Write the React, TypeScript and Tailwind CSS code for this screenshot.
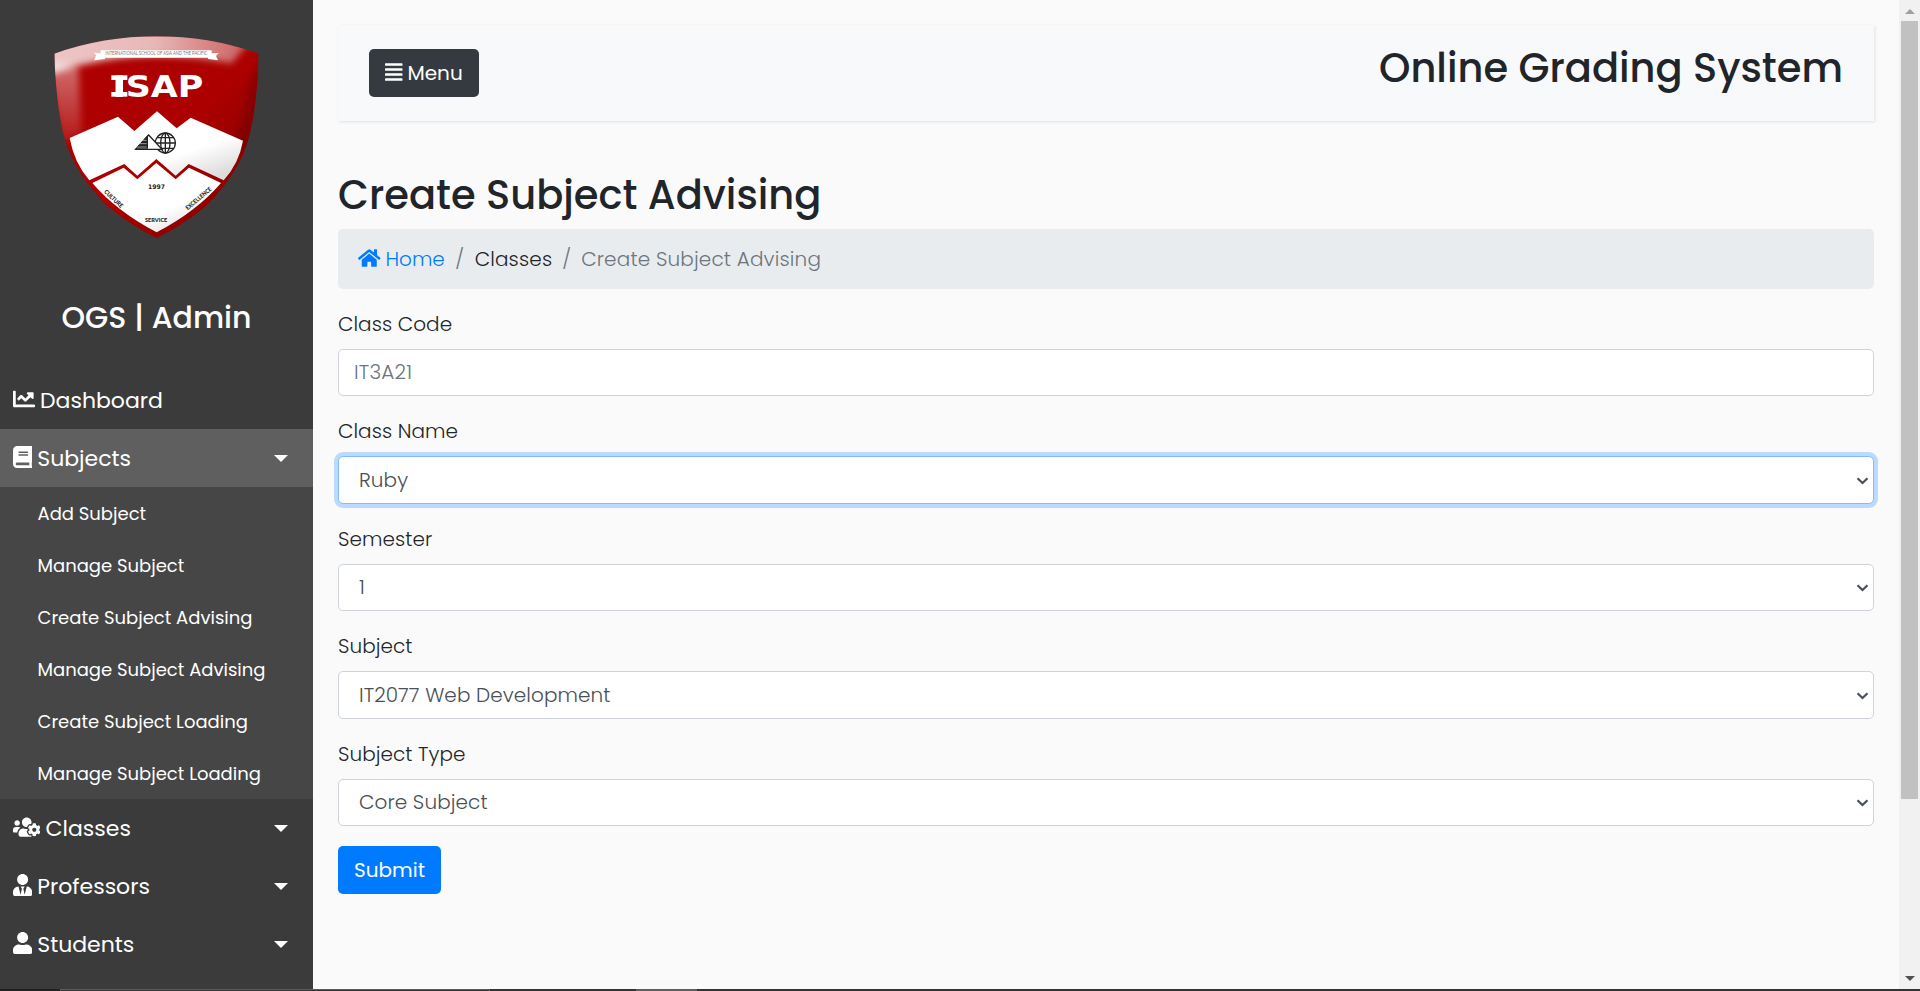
import type { ReactNode } from "react";
import {
  FaAlignJustify,
  FaBook,
  FaChartLine,
  FaHome,
  FaUser,
  FaUsersCog,
  FaUserTie,
} from "react-icons/fa";

const SHIELD =
  "M163 161 Q310 109 470 109 Q630 109 776 161 Q774 260 760 350 Q745 440 715 492 Q682 554 618 618 Q549 676 470 714 Q391 676 322 618 Q258 554 225 492 Q190 430 178 340 Q166 260 163 161 Z";

function Crest() {
  return (
    <svg viewBox="0 0 939 780" className="block h-[260px] w-[313px] shrink-0">
      <defs>
        <clipPath id="shield">
          <path d={SHIELD} />
        </clipPath>
        <linearGradient id="red" x1="0" y1="0" x2="1" y2="1">
          <stop offset="0" stopColor="#b00000" />
          <stop offset="0.55" stopColor="#ac0000" />
          <stop offset="1" stopColor="#780000" />
        </linearGradient>
        <linearGradient id="paper" x1="0.3" y1="0" x2="1" y2="0.8">
          <stop offset="0.65" stopColor="#ffffff" />
          <stop offset="1" stopColor="#dcdcdc" />
        </linearGradient>
        <linearGradient id="shine" x1="0" y1="0" x2="1" y2="0">
          <stop offset="0" stopColor="#fff" stopOpacity="0.78" />
          <stop offset="0.5" stopColor="#fff" stopOpacity="0.72" />
          <stop offset="1" stopColor="#fff" stopOpacity="0.3" />
        </linearGradient>
        <linearGradient id="sideShine" x1="0" y1="0" x2="0" y2="1">
          <stop offset="0" stopColor="#fff" stopOpacity="0.45" />
          <stop offset="1" stopColor="#fff" stopOpacity="0.08" />
        </linearGradient>
        <filter id="soft" x="-20%" y="-20%" width="140%" height="140%">
          <feGaussianBlur stdDeviation="11" />
        </filter>
      </defs>
      <g clipPath="url(#shield)">
        <rect x="160" y="100" width="620" height="620" fill="url(#red)" />
        <path d="M140 180 L235 200 L245 400 L185 430 Z" fill="url(#sideShine)" filter="url(#soft)" />
        <path
          d="M130 60 H800 L745 130 L695 190 Q580 168 470 168 Q360 168 240 196 L150 225 Z"
          fill="url(#shine)"
          filter="url(#soft)"
        />
        <path d="M790 160 L745 260 Q730 380 690 440 L760 460 Z" fill="#600000" opacity="0.4" filter="url(#soft)" />
      </g>
      <path
        d="M209 414 L354 350 L403 393 L471 334 L530 385 L572 353 L729 422 Q717 490 671 541 L566 492 L527 527 L469 477 L412 527 L373 492 L268 541 Q223 490 209 414 Z"
        fill="url(#paper)"
      />
      <path
        d="M277 549 L371 503 L412 538 L469 489 L527 538 L567 503 L663 549 Q590 634 470 697 Q350 634 277 549 Z"
        fill="url(#paper)"
      />
      <path d="M282 181 L289 166 L282 158 L302 160 V151 H635 V160 L656 159 L648 168 L654 181 L624 177 V173 H315 V177 Z" fill="#fff" />
      <text x="316" y="164" textLength="306" lengthAdjust="spacingAndGlyphs" fontSize="14" fill="#777" className="font-['Lato']">
        INTERNATIONAL SCHOOL OF ASIA AND THE PACIFIC
      </text>
      <rect x="334" y="226" width="48" height="14" fill="#fff" />
      <rect x="334" y="276" width="48" height="14" fill="#fff" />
      <rect x="347" y="226" width="22" height="64" fill="#fff" />
      <text
        x="338"
        y="290"
        textLength="272"
        lengthAdjust="spacingAndGlyphs"
        fontSize="88"
        fontWeight="bold"
        fill="#fff"
        className="font-['DejaVu_Sans']"
      >
        ISAP
      </text>
      <g fill="none" stroke="#222" strokeWidth="4">
        <circle cx="496" cy="429" r="30" />
        <ellipse cx="496" cy="429" rx="14" ry="30" />
        <path d="M496 399 V459 M466 429 H526 M473 413 H519 M473 445 H519" />
        <path d="M446 405 L486 448 H407 Z" fill="#fff" />
        <path d="M444 404 V446 H406 Z" fill="#222" stroke="none" />
        <path d="M424 421 H440 M416 431 H440 M408 441 H440" stroke="#ddd" strokeWidth="2" />
      </g>
      <text x="444" y="567" textLength="51" fontSize="19" fontWeight="bold" fill="#222" className="font-['DejaVu_Sans']" lengthAdjust="spacingAndGlyphs">
        1997
      </text>
      <text x="435" y="666" textLength="67" fontSize="17" fontWeight="900" fill="#222" className="font-['Lato']" lengthAdjust="spacingAndGlyphs">
        SERVICE
      </text>
      <text x="0" y="0" textLength="70" fontSize="18" fontWeight="900" fill="#222" transform="translate(311 577) rotate(43)" className="font-['Lato']" lengthAdjust="spacingAndGlyphs">
        CULTURE
      </text>
      <text x="0" y="0" textLength="96" fontSize="18" fontWeight="900" fill="#222" transform="translate(563 631) rotate(-40)" className="font-['Lato']" lengthAdjust="spacingAndGlyphs">
        EXCELLENCE
      </text>
    </svg>
  );
}

function NavItem({
  icon,
  label,
  active,
  caret = true,
}: {
  icon: ReactNode;
  label: string;
  active?: boolean;
  caret?: boolean;
}) {
  return (
    <a
      className={`flex h-[58px] shrink-0 items-center gap-[5.5px] pr-[25px] pl-[12.5px] text-[22px] leading-[33px] ${
        active ? "bg-[#5f5f5f]" : ""
      }`}
    >
      {icon}
      <span>{label}</span>
      {caret && (
        <span className="ml-auto h-0 w-0 border-x-[7px] border-t-[7px] border-x-transparent border-t-white" />
      )}
    </a>
  );
}

const SUBJECT_LINKS = [
  "Add Subject",
  "Manage Subject",
  "Create Subject Advising",
  "Manage Subject Advising",
  "Create Subject Loading",
  "Manage Subject Loading",
];

function Sidebar() {
  return (
    <nav className="flex w-[313px] shrink-0 flex-col overflow-hidden bg-[#3b3b3b] text-white">
      <Crest />
      <h3 className="mb-[18px] flex h-[93px] shrink-0 items-center justify-center pt-[22px] text-[30px] leading-[36px] font-medium">
        OGS | Admin
      </h3>
      <NavItem icon={<FaChartLine className="mt-[-3px] h-[22px] w-[22px]" />} label="Dashboard" caret={false} />
      <NavItem icon={<FaBook className="mt-[-3px] h-[22px] w-[19.25px]" />} label="Subjects" active />
      <ul className="shrink-0 bg-[#464646]">
        {SUBJECT_LINKS.map((link) => (
          <li key={link} className="h-[52px] pt-[12.5px] pl-[37.5px] text-[18px] leading-[27px]">
            {link}
          </li>
        ))}
      </ul>
      <NavItem icon={<FaUsersCog className="mt-[-3px] h-[22px] w-[27.5px]" />} label="Classes" />
      <NavItem icon={<FaUserTie className="mt-[-3px] h-[22px] w-[19.25px]" />} label="Professors" />
      <NavItem icon={<FaUser className="mt-[-3px] h-[22px] w-[19.25px]" />} label="Students" />
    </nav>
  );
}

function Label({ children }: { children: string }) {
  return (
    <label className="mb-[10px] block h-[30px] leading-[30px] tracking-[0.06px] text-[#212529]">{children}</label>
  );
}

function SelectField({ label, value, focused }: { label: string; value: string; focused?: boolean }) {
  return (
    <div className="mb-[20px]">
      <Label>{label}</Label>
      <div
        className={`flex h-[47.5px] items-center justify-between rounded-[5px] border bg-white pr-[4.5px] pl-[20px] text-[#495057] ${
          focused ? "border-[#80bdff] shadow-[0_0_0_4px_#bbdafd]" : "border-[#ced4da]"
        }`}
      >
        <span className="leading-[30px] tracking-[0.09px]">{value}</span>
        <svg viewBox="0 0 13 8" className="mt-[2px] h-[8px] w-[13px]" fill="none" stroke="#495057" strokeWidth="2.2">
          <path d="M1.5 1.2 L6.5 6 L11.5 1.2" />
        </svg>
      </div>
    </div>
  );
}

function Scrollbar() {
  return (
    <div className="flex w-[21px] shrink-0 flex-col items-center bg-[#f1f1f1]">
      <div className="mt-[9px] h-0 w-0 border-x-[5px] border-b-[5px] border-x-transparent border-b-[#a0a0a0]" />
      <div className="mt-[7px] mr-[1px] h-[778px] w-[17px] bg-[#c1c1c1]" />
      <div className="mt-auto mb-[8px] h-0 w-0 border-x-[5px] border-t-[5px] border-x-transparent border-t-[#505050]" />
    </div>
  );
}

export default function App() {
  return (
    <div className="h-[991px] w-[1920px] overflow-hidden bg-[#fafafa] font-['Poppins','Inter',sans-serif] text-[20px] text-[#212529]">
      <div className="flex h-[989px]">
        <Sidebar />
        <main className="flex-1 px-[25px] pt-[25px] font-light">
          <header className="flex h-[95.5px] items-center justify-between bg-[#f8f9fa] px-[31px] shadow-[1px_1px_3px_rgba(0,0,0,0.1)]">
            <button className="flex h-[47.5px] items-center gap-[5px] rounded-[5px] bg-[#343a40] px-[16px] text-[20px] leading-[30px] font-normal text-white">
              <FaAlignJustify className="mt-[-2px] h-[20px] w-[17.5px]" />
              <span>Menu</span>
            </button>
            <h2 className="mb-[10px] text-[40px] leading-[48px] font-medium">Online Grading System</h2>
          </header>

          <h2 className="mt-[50px] mb-[10px] h-[48px] text-[40px] leading-[48px] font-medium">
            Create Subject Advising
          </h2>

          <ol className="mb-[20px] flex h-[60px] items-center rounded-[5px] bg-[#e9ecef] px-[20px] leading-[30px]">
            <li className="flex items-center gap-[5px] text-[#007bff]">
              <FaHome className="mt-[-2px] h-[20px] w-[22.5px]" />
              <span>Home</span>
            </li>
            <li className="pr-[10.5px] pl-[10.5px] text-[#6c757d]">/</li>
            <li className="tracking-[0.16px]">Classes</li>
            <li className="px-[10px] text-[#6c757d]">/</li>
            <li className="tracking-[0.16px] text-[#6c757d]">Create Subject Advising</li>
          </ol>

          <form>
            <div className="mb-[20px]">
              <Label>Class Code</Label>
              <input
                placeholder="IT3A21"
                className="block h-[47.5px] w-full rounded-[5px] border border-[#ced4da] bg-white px-[15px] leading-[30px] tracking-[0.2px] placeholder:text-[#6c757d] placeholder:opacity-100"
              />
            </div>
            <SelectField label="Class Name" value="Ruby" focused />
            <SelectField label="Semester" value="1" />
            <SelectField label="Subject" value="IT2077 Web Development" />
            <SelectField label="Subject Type" value="Core Subject" />
            <button
              type="button"
              className="h-[47.5px] w-[103px] rounded-[5px] bg-[#007bff] text-center leading-[30px] font-normal text-white"
            >
              Submit
            </button>
          </form>
        </main>
        <Scrollbar />
      </div>
      <footer className="flex h-[2px] bg-[#333333]">
        <div className="w-[60px] bg-[#222222]" />
        <div className="mr-[146px] w-[430px] border-x border-t border-[#5c5c5c]" />
        <div className="w-[61px] bg-[#5f5f5f]" />
      </footer>
    </div>
  );
}
